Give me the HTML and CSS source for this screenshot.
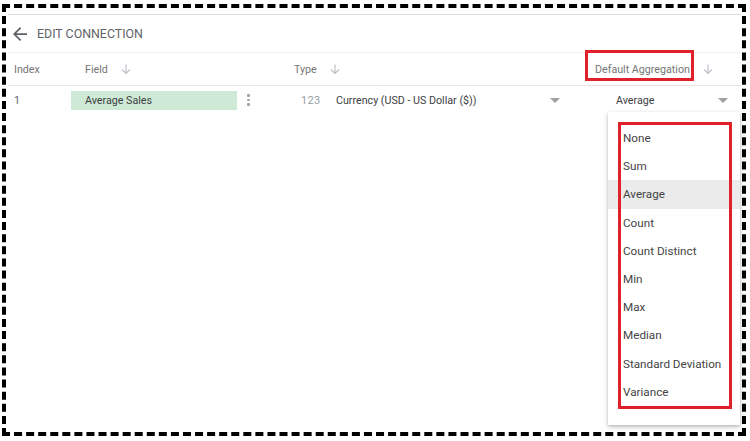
FILE: index.html
```html
<!DOCTYPE html>
<html>
<head>
<meta charset="utf-8">
<link rel="stylesheet" href="styles.css">
</head>
<body>
<div class="frame">
  <div class="panel">
    <div class="topbar">
      <svg class="back" viewBox="4 4 16 16" width="14" height="14"><path d="M20 11H7.83l5.59-5.59L12 4l-8 8 8 8 1.41-1.41L7.83 13H20v-2z" fill="#5f6368"/></svg>
      <span class="title">EDIT CONNECTION</span>
    </div>
    <div class="thead">
      <div class="h-index">Index</div>
      <div class="h-field">Field <svg class="sort" viewBox="0 0 12 12" width="12" height="12"><path d="M6 1.5V10.5M2 6.5L6 10.5L10 6.5" fill="none" stroke="#bdc1c6" stroke-width="1.2"/></svg></div>
      <div class="h-type">Type <svg class="sort" viewBox="0 0 12 12" width="12" height="12"><path d="M6 1.5V10.5M2 6.5L6 10.5L10 6.5" fill="none" stroke="#bdc1c6" stroke-width="1.2"/></svg></div>
      <div class="h-agg"><span class="agg-label">Default Aggregation</span> <svg class="sort" viewBox="0 0 12 12" width="12" height="12"><path d="M6 1.5V10.5M2 6.5L6 10.5L10 6.5" fill="none" stroke="#bdc1c6" stroke-width="1.2"/></svg></div>
    </div>
    <div class="trow">
      <div class="d-index">1</div>
      <div class="d-field">Average Sales</div>
      <div class="d-kebab"><span class="dot"></span><span class="dot"></span><span class="dot"></span></div>
      <div class="d-type">
        <span class="num">123</span>
        <span class="type-val">Currency (USD - US Dollar ($))</span>
        <span class="caret"></span>
      </div>
      <div class="d-agg">
        <span class="agg-val">Average</span>
        <span class="caret"></span>
      </div>
    </div>
  </div>
  <div class="hl-head"></div>
  <ul class="menu">
    <li>None</li>
    <li>Sum</li>
    <li class="active">Average</li>
    <li>Count</li>
    <li>Count Distinct</li>
    <li>Min</li>
    <li>Max</li>
    <li>Median</li>
    <li>Standard Deviation</li>
    <li>Variance</li>
  </ul>
</div>
</body>
</html>
```
FILE: styles.css
```css
html, body {
  margin: 0;
  padding: 0;
  background: #fff;
}
body {
  font-family: Roboto, "Liberation Sans", Arial, sans-serif;
  font-size: 11px;
  color: #3c4043;
}
.frame {
  position: relative;
  box-sizing: border-box;
  margin: 4px 0 0 2px;
  width: 744px;
  height: 432px;
  border: 4px dashed #000;
}
.panel {
  margin: 6px 1px 0 2px;
  border-top: 1px solid #dadce0;
}
.topbar {
  height: 37px;
  display: flex;
  align-items: center;
  padding-left: 5px;
  border-bottom: 1px solid #f1f1f1;
}
.back {
  display: block;
}
.title {
  margin-left: 10px;
  font-size: 12.4px;
  color: #5f6368;
}
.thead {
  height: 32px;
  display: flex;
  align-items: center;
  border-bottom: 1px solid #e6e6e6;
  color: #757575;
  font-size: 10.7px;
}
.thead > div {
  display: flex;
  align-items: center;
}
.sort {
  display: block;
  margin-left: 12px;
}
.h-index {
  width: 71px;
  padding-left: 6px;
}
.h-field {
  width: 209px;
}
.h-type {
  width: 301px;
}
.h-agg {
  flex: 1;
}
.trow {
  height: 28px;
  display: flex;
  align-items: center;
  font-size: 10.7px;
}
.d-index {
  width: 57px;
  padding-left: 6px;
  color: #5f6368;
}
.d-field {
  box-sizing: border-box;
  width: 166px;
  height: 19px;
  line-height: 19px;
  padding-left: 14px;
  background: #ceead6;
  color: #3c4043;
}
.d-kebab {
  width: 23px;
  display: flex;
  flex-direction: column;
  align-items: center;
  gap: 2px;
}
.dot {
  width: 2.5px;
  height: 2.5px;
  border-radius: 50%;
  background: #9aa0a6;
}
.d-type {
  box-sizing: border-box;
  width: 335px;
  padding-left: 41px;
  padding-right: 35px;
  display: flex;
  align-items: center;
}
.num {
  width: 35px;
  color: #9aa0a6;
  font-size: 11px;
  letter-spacing: 0.3px;
}
.type-val {
  flex: 1;
}
.caret {
  width: 0;
  height: 0;
  border-left: 5px solid transparent;
  border-right: 5px solid transparent;
  border-top: 5px solid #a0a0a0;
}
.d-agg {
  flex: 1;
  padding-left: 21px;
  padding-right: 13px;
  display: flex;
  align-items: center;
}
.agg-val {
  flex: 1;
}
.hl-head {
  position: absolute;
  left: 579px;
  top: 42px;
  width: 109px;
  height: 31px;
  box-sizing: border-box;
  border: 3px solid #e0202a;
}
.menu {
  position: absolute;
  left: 602px;
  top: 104px;
  width: 132px;
  margin: 0;
  padding: 12px 0 19px;
  list-style: none;
  background: #fff;
  box-shadow: 0 2px 5px rgba(0,0,0,0.22), 0 1px 2px rgba(0,0,0,0.12);
  font-size: 11.7px;
  color: #444;
}
.menu::after {
  content: "";
  position: absolute;
  left: 10px;
  top: 10px;
  width: 114px;
  height: 287px;
  box-sizing: border-box;
  border: 3px solid #e0202a;
}
.menu li {
  height: 28.2px;
  line-height: 28.2px;
  padding-left: 15px;
}
.menu li.active {
  background: #ebebeb;
}
```
